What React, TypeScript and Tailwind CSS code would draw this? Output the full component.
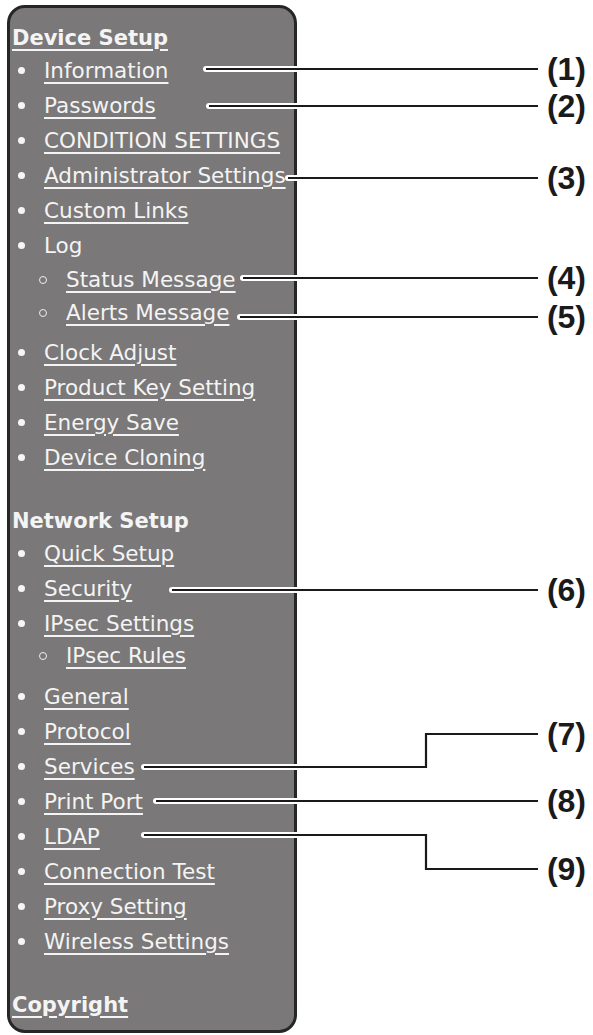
import React from "react";

type Link = { label: string; plain?: boolean; sub?: string[] };

const deviceLinks: Link[] = [
  { label: "Information" },
  { label: "Passwords" },
  { label: "CONDITION SETTINGS" },
  { label: "Administrator Settings" },
  { label: "Custom Links" },
  { label: "Log", plain: true, sub: ["Status Message", "Alerts Message"] },
  { label: "Clock Adjust" },
  { label: "Product Key Setting" },
  { label: "Energy Save" },
  { label: "Device Cloning" },
];

const networkLinks: Link[] = [
  { label: "Quick Setup" },
  { label: "Security" },
  { label: "IPsec Settings", sub: ["IPsec Rules"] },
  { label: "General" },
  { label: "Protocol" },
  { label: "Services" },
  { label: "Print Port" },
  { label: "LDAP" },
  { label: "Connection Test" },
  { label: "Proxy Setting" },
  { label: "Wireless Settings" },
];

// leader lines: polyline points, then the label and its y
const callouts: { pts: [number, number][]; n: number; y: number }[] = [
  { pts: [[206, 69], [538, 69]], n: 1, y: 69 },
  { pts: [[209, 106], [538, 106]], n: 2, y: 106 },
  { pts: [[288, 178], [538, 178]], n: 3, y: 178 },
  { pts: [[243, 278], [538, 278]], n: 4, y: 278 },
  { pts: [[240, 317], [538, 317]], n: 5, y: 317 },
  { pts: [[172, 590], [538, 590]], n: 6, y: 590 },
  { pts: [[144, 767], [426, 767], [426, 734], [538, 734]], n: 7, y: 734 },
  { pts: [[156, 801], [538, 801]], n: 8, y: 801 },
  { pts: [[144, 835], [426, 835], [426, 869], [538, 869]], n: 9, y: 869 },
];

const baseText = "text-[21.5px] text-[#f4f4f4] leading-none";
const linkText = `${baseText} underline decoration-[1.5px] underline-offset-[4px]`;

function LinkList({ links, tailGap }: { links: Link[]; tailGap: string }) {
  return (
    <ul className={tailGap}>
      {links.map((l) => (
        <li key={l.label}>
          <div className="flex h-[35px] items-center">
            <span className="flex w-[34px] shrink-0">
              <span className="ml-[8px] h-[7px] w-[7px] rounded-full bg-[#f6f6f6]" />
            </span>
            {l.plain ? (
              <span className={baseText}>{l.label}</span>
            ) : (
              <a className={linkText}>{l.label}</a>
            )}
          </div>
          {l.sub && (
            <ul className={l.label === "Log" ? "mb-[6px]" : "mb-[8px]"}>
              {l.sub.map((s) => (
                <li
                  key={s}
                  className={`flex items-center ${l.label === "Log" ? "h-[33px]" : "h-[30px]"}`}
                >
                  <span className="flex w-[56px] shrink-0">
                    <span className="ml-[29px] h-[8px] w-[8px] rounded-full border-[1.5px] border-[#eeeeee]" />
                  </span>
                  <a className={linkText}>{s}</a>
                </li>
              ))}
            </ul>
          )}
        </li>
      ))}
    </ul>
  );
}

function Heading({ text, link }: { text: string; link?: boolean }) {
  return (
    <div className="flex h-[30px] items-center pl-[2px]">
      <span
        className={`text-[21px] font-bold leading-none text-[#f4f4f4] ${
          link ? "underline decoration-[1.5px] underline-offset-[4px]" : ""
        }`}
      >
        {text}
      </span>
    </div>
  );
}

export default function App() {
  return (
    <div
      className="relative h-[1035px] w-[593px] overflow-hidden bg-white pl-[7px] pt-[5px]"
      style={{ fontFamily: '"DejaVu Sans", Verdana, sans-serif' }}
    >
      <nav className="h-[1028px] w-[290px] rounded-[18px] border-[3px] border-[#262626] bg-[#7a7878] pt-[15px]">
        <Heading text="Device Setup" link />
        <LinkList links={deviceLinks} tailGap="mb-[31px]" />
        <Heading text="Network Setup" />
        <LinkList links={networkLinks} tailGap="mb-[31px]" />
        <Heading text="Copyright" link />
      </nav>

      <svg
        className="pointer-events-none absolute left-0 top-0"
        width={593}
        height={1035}
        viewBox="0 0 593 1035"
      >
        {callouts.map((c) => {
          const p = c.pts.map(([x, y]) => `${x},${y}`).join(" ");
          return (
            <g key={c.n}>
              <polyline points={p} fill="none" stroke="#ffffff" strokeWidth={6} strokeLinecap="round" strokeLinejoin="miter" />
              <polyline points={p} fill="none" stroke="#1a1a1a" strokeWidth={2.2} strokeLinejoin="miter" />
              <text
                x={586}
                y={c.y}
                textAnchor="end"
                dominantBaseline="central"
                fontFamily='"Liberation Sans", Arial, sans-serif'
                fontWeight={700}
                fontSize={32}
                fill="#1a1a1a"
              >
                ({c.n})
              </text>
            </g>
          );
        })}
      </svg>
    </div>
  );
}
